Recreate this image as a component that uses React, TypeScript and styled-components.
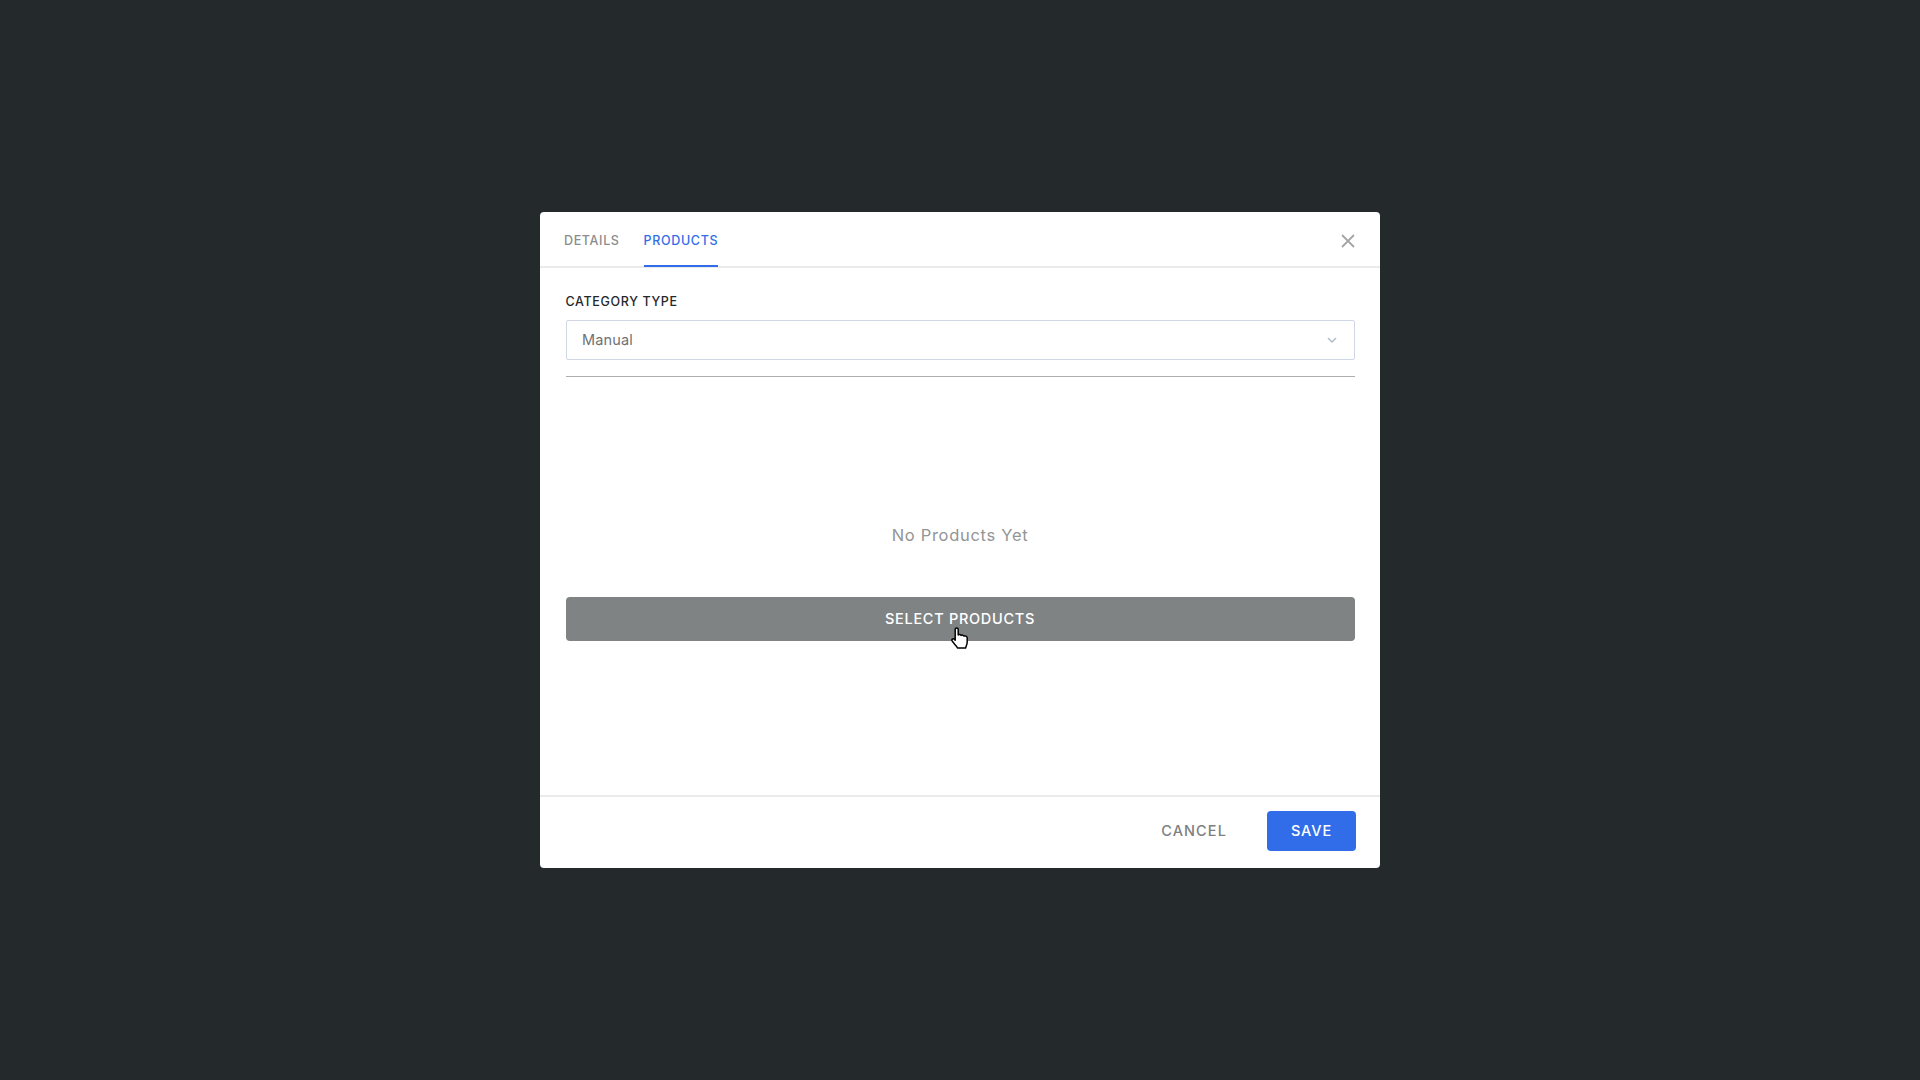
import styled, { createGlobalStyle } from "styled-components";

const GlobalStyle = createGlobalStyle`
  html, body {
    margin: 0;
    padding: 0;
    height: 100%;
  }
  body {
    background: #24292c;
    font-family: "Inter", "Liberation Sans", sans-serif;
  }
  * {
    box-sizing: border-box;
  }
`;

const HandCursor = () => (
  <CursorSvg viewBox="0 0 19 22" width="19" height="22">
    <path
      d="M4.2 2.2c0-1.6 3-1.6 3 0V8c1-.7 2.4-.5 2.9.4 1-.6 2.4-.3 2.9.7 1.2-.5 3.2 0 3.2 1.8V15c0 2.2-.9 3.5-1.6 6H6.5c-.5-1.2-1.6-2.3-2.6-3.4L1.2 14c-1-1.4.8-3 2-1.9l1 1z"
      fill="#fff"
      stroke="#000"
      strokeWidth="1.5"
      strokeLinejoin="round"
    />
  </CursorSvg>
);

export default function App() {
  return (
    <>
      <GlobalStyle />
      <Overlay>
        <Modal>
          <TabBar>
            <Tab>DETAILS</Tab>
            <Tab $active>PRODUCTS</Tab>
            <CloseButton aria-label="close">
              <svg viewBox="0 0 14 14" width="14" height="14">
                <path d="M1 1l12 12M13 1L1 13" stroke="#a3a5a6" strokeWidth="1.8" fill="none" />
              </svg>
            </CloseButton>
          </TabBar>
          <Body>
            <FieldLabel>CATEGORY TYPE</FieldLabel>
            <SelectBox>
              <SelectValue>Manual</SelectValue>
              <svg viewBox="0 0 10 6" width="10" height="6">
                <path d="M1 1l4 4 4-4" stroke="#b3bdcb" strokeWidth="1.5" fill="none" />
              </svg>
            </SelectBox>
            <Divider />
            <EmptyText>No Products Yet</EmptyText>
            <SelectProducts>
              <span>SELECT PRODUCTS</span>
              <HandCursor />
            </SelectProducts>
          </Body>
          <Footer>
            <CancelButton>CANCEL</CancelButton>
            <SaveButton>SAVE</SaveButton>
          </Footer>
        </Modal>
      </Overlay>
    </>
  );
}

const Overlay = styled.div`
  display: flex;
  align-items: flex-start;
  justify-content: center;
  width: 100%;
  height: 1080px;
  padding-top: 212px;
  overflow: hidden;
`;

const Modal = styled.div`
  display: flex;
  flex-direction: column;
  width: 840px;
  height: 656px;
  background: #fff;
  border-radius: 4px;
`;

const TabBar = styled.div`
  display: flex;
  align-items: flex-start;
  gap: 24px;
  height: 56px;
  padding: 0 25px 0 24px;
  border-bottom: 2px solid #ebebeb;
`;

const Tab = styled.div<{ $active?: boolean }>`
  display: flex;
  align-items: center;
  height: 55px;
  padding-top: 3px;
  font-size: 12.5px;
  font-weight: 500;
  letter-spacing: 0.65px;
  color: ${(p) => (p.$active ? "#316de8" : "#8a8c8d")};
  border-bottom: 2px solid ${(p) => (p.$active ? "#316de8" : "transparent")};
`;

const CloseButton = styled.button`
  display: flex;
  align-items: center;
  justify-content: center;
  height: 54px;
  margin-left: auto;
  padding: 4px 0 0;
  border: 0;
  background: none;
`;

const Body = styled.div`
  display: flex;
  flex-direction: column;
  flex: 1;
  padding: 26px 25.5px 0;
`;

const FieldLabel = styled.label`
  height: 16px;
  margin-bottom: 10px;
  font-size: 12.5px;
  line-height: 16px;
  font-weight: 500;
  letter-spacing: 0.65px;
  color: #25282a;
`;

const SelectBox = styled.div`
  display: flex;
  align-items: center;
  justify-content: space-between;
  height: 40px;
  padding: 0 17px 1px 15.5px;
  background: #fff;
  border: 1px solid #cfd8e3;
  border-radius: 2px;
`;

const SelectValue = styled.span`
  font-size: 14.5px;
  letter-spacing: 0.15px;
  color: #6f7274;
`;

const Divider = styled.hr`
  width: 100%;
  height: 1px;
  margin: 16px 0 0;
  border: 0;
  background: #aeaeae;
`;

const EmptyText = styled.div`
  margin-top: 146px;
  height: 24px;
  line-height: 24px;
  text-align: center;
  font-size: 16.5px;
  letter-spacing: 0.7px;
  color: #939596;
`;

const SelectProducts = styled.button`
  position: relative;
  width: 100%;
  height: 44px;
  margin-top: 50px;
  padding: 0 0 2px;
  border: 0;
  border-radius: 4px;
  background: #7f8384;
  color: #fff;
  font-family: inherit;
  font-size: 14.5px;
  font-weight: 500;
  letter-spacing: 0.7px;
`;

const CursorSvg = styled.svg`
  position: absolute;
  left: 385.5px;
  top: 30px;
`;

const Footer = styled.div`
  display: flex;
  align-items: center;
  justify-content: flex-end;
  gap: 40px;
  height: 73px;
  padding: 0 24px 3px;
  border-top: 2px solid #ebebeb;
`;

const CancelButton = styled.button`
  padding: 0 0 2px;
  border: 0;
  background: none;
  color: #7d7f80;
  font-family: inherit;
  font-size: 14.5px;
  font-weight: 500;
  letter-spacing: 1.1px;
`;

const SaveButton = styled.button`
  width: 89px;
  height: 40px;
  padding: 0 0 1px;
  border: 0;
  border-radius: 4px;
  background: #316de8;
  color: #fff;
  font-family: inherit;
  font-size: 14.5px;
  font-weight: 500;
  letter-spacing: 0.9px;
`;
